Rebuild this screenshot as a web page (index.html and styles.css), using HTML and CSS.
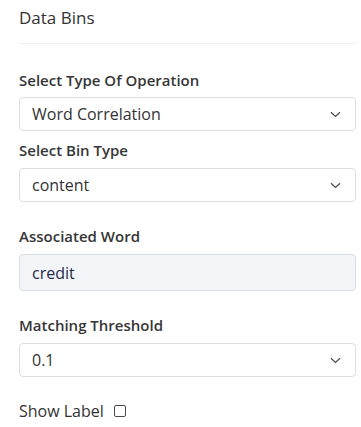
FILE: index.html
```html
<!DOCTYPE html>
<html>
  <head>
    <meta charset="utf-8" />
    <title>Data Bins</title>
    <link rel="stylesheet" href="styles.css">
  </head>
  <body>
    <div id="panel">
      <div class="panel-header">Data Bins</div>

      <div class="field first">
        <label class="field-label">Select Type Of Operation</label>
        <div class="select">
          <span>Word Correlation</span>
          <svg class="chevron" width="11" height="7" viewBox="0 0 11 7"><path d="M1 1.2 L5.5 5.5 L10 1.2" fill="none" stroke="#4a4a4a" stroke-width="1.2"/></svg>
        </div>
      </div>

      <div class="field second">
        <label class="field-label">Select Bin Type</label>
        <div class="select">
          <span>content</span>
          <svg class="chevron" width="11" height="7" viewBox="0 0 11 7"><path d="M1 1.2 L5.5 5.5 L10 1.2" fill="none" stroke="#4a4a4a" stroke-width="1.2"/></svg>
        </div>
      </div>

      <div class="field">
        <label class="field-label">Associated Word</label>
        <input class="text-input" type="text" value="credit" />
      </div>

      <div class="field">
        <label class="field-label">Matching Threshold</label>
        <div class="select">
          <span>0.1</span>
          <svg class="chevron" width="11" height="7" viewBox="0 0 11 7"><path d="M1 1.2 L5.5 5.5 L10 1.2" fill="none" stroke="#4a4a4a" stroke-width="1.2"/></svg>
        </div>
      </div>

      <div class="field check-row">
        <span class="check-label">Show Label</span>
        <span class="checkbox"></span>
      </div>
    </div>
  </body>
</html>
```

FILE: styles.css
```css
/* Data bins side panel */
body {
  font-family: "Open Sans", "Noto Sans", sans-serif;
  background-color: #fff;
  color: #333;
  margin: 0;
  padding: 0;
}
#panel {
  padding: 0 5px 0 19px;
}
.panel-header {
  font-size: 17px;
  font-weight: 500;
  line-height: 22px;
  padding-top: 7px;
  height: 36px;
  border-bottom: 1px solid #f0f0f0;
  color: #333;
}
.field {
  margin-top: 24px;
}
.field.first {
  margin-top: 26px;
}
.field.second {
  margin-top: 9px;
}
.field-label {
  display: block;
  font-size: 15px;
  font-weight: 600;
  line-height: 20px;
  color: #363636;
  margin-bottom: 8px;
}
.field.first .field-label {
  margin-bottom: 7px;
}
.select {
  display: flex;
  align-items: center;
  justify-content: space-between;
  height: 32px;
  border: 1px solid #dedede;
  border-radius: 4px;
  padding: 0 14px 0 12px;
  font-size: 16px;
  color: #333;
}
.chevron {
  display: block;
}
.text-input {
  display: block;
  box-sizing: border-box;
  width: 100%;
  height: 37px;
  margin: 0;
  padding: 0 12px;
  border: 1px solid #d8dce3;
  border-radius: 4px;
  background-color: #f3f5f9;
  font-family: inherit;
  font-size: 16px;
  color: #1e2b4a;
}
.check-row {
  display: flex;
  align-items: center;
  gap: 10px;
  height: 20px;
}
.check-label {
  font-size: 16px;
  line-height: 20px;
  color: #333;
}
.checkbox {
  width: 10px;
  height: 10px;
  border: 1px solid #4a4a4a;
  border-radius: 2px;
}
```
